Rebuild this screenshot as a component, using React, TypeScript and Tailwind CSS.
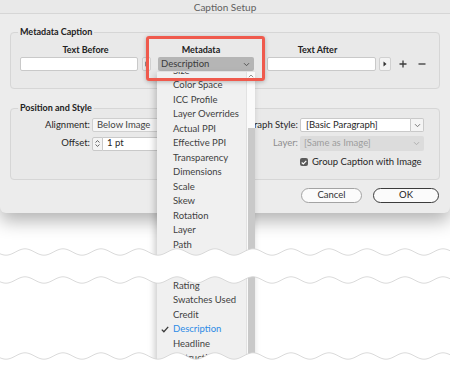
import React from "react";

const TOP_ITEMS = [
  "Size",
  "Color Space",
  "ICC Profile",
  "Layer Overrides",
  "Actual PPI",
  "Effective PPI",
  "Transparency",
  "Dimensions",
  "Scale",
  "Skew",
  "Rotation",
  "Layer",
  "Path",
  "Author",
];

const BOTTOM_ITEMS = ["Rating", "Swatches Used", "Credit", "Description", "Headline", "Instructions"];

// torn-paper wave, peaks every 38px
const wavePts = (cy: number, reverse = false) => {
  const pts: string[] = [];
  for (let i = 0; i <= 225; i++) {
    const x = reverse ? 450 - i * 2 : i * 2;
    const y = cy - 3.2 * Math.cos(((x - 25) / 38) * Math.PI * 2);
    pts.push(`${x},${y.toFixed(2)}`);
  }
  return pts;
};

const Chevron = ({ color = "#6b6b6b" }: { color?: string }) => (
  <svg width="7" height="5" viewBox="0 0 7 5">
    <path d="M1 1.2l2.5 2.5L6 1.2" fill="none" stroke={color} strokeWidth="1" />
  </svg>
);

const ArrowButton = ({ w }: { w: string }) => (
  <div className={`${w} h-[14px] flex items-center justify-center bg-[#f3f3f3] border border-[#d0d0d0] rounded-[2px]`}>
    <svg width="4" height="6" viewBox="0 0 4 6">
      <path d="M0.5 0.5L3.5 3L0.5 5.5Z" fill="#333" />
    </svg>
  </div>
);

const MenuItem = ({ label, checked }: { label: string; checked?: boolean }) => (
  <div className="h-[14.5px] flex items-center">
    <div className="w-[16px] pl-[4px] flex items-center">
      {checked && (
        <svg width="8" height="7" viewBox="0 0 8 7">
          <path d="M0.8 3.6L2.9 5.8L7.2 0.9" fill="none" stroke="#3a3a3a" strokeWidth="1.3" />
        </svg>
      )}
    </div>
    <span className={`whitespace-nowrap ${checked ? "text-[#2d8be6]" : "text-[#3f3f3f]"}`}>{label}</span>
  </div>
);

export default function App() {
  const w1 = wavePts(252);
  const w2 = wavePts(280);
  const w3 = wavePts(356);

  return (
    <div className="relative w-[450px] h-[376px] overflow-hidden bg-white font-['Lato','Noto_Sans',sans-serif] text-[9.5px] text-[#262626]">
      {/* dialog */}
      <div className="h-[213px] flex flex-col bg-[#ececec] rounded-b-[6px] shadow-[0_8px_18px_rgba(0,0,0,0.3)]">
        <div className="h-[14px] flex items-center justify-center bg-[#e9e9e9] border-b border-[#d6d6d6] text-[10px] text-[#5f5f5f] leading-none">
          Caption Setup
        </div>

        <fieldset className="mx-[10px] mt-[12px] pl-[7px] pb-[17px] border border-[#d6d6d6] rounded-[4px] bg-[#e9e9e9]">
          <legend className="px-[2px] text-[9px] font-bold leading-[12px] text-[#222]">Metadata Caption</legend>
          <div className="flex pt-[6px] ml-[2px]">
            <div className="w-[131px] flex flex-col items-center">
              <div className="h-[12px] leading-[12px] text-[9px] font-bold text-[#222]">Text Before</div>
              <div className="mt-[1px] flex">
                <div className="w-[118px] h-[14px] bg-white border border-[#c9c9c9] rounded-[2px]" />
                <div className="ml-[4px]">
                  <ArrowButton w="w-[9px]" />
                </div>
              </div>
            </div>
            <div className="ml-[7px] w-[96px] flex flex-col">
              <div className="h-[12px] leading-[12px] text-[9px] font-bold text-[#222] text-center pr-[10px]">Metadata</div>
              <div className="mt-[1px] h-[14px] flex items-center justify-between pl-[3px] pr-[4px] bg-[#b5b5b5] rounded-[2px] text-[#3a3a3a]">
                <span>Description</span>
                <Chevron color="#555" />
              </div>
            </div>
            <div className="ml-[13px] w-[124px] flex flex-col">
              <div className="h-[12px] leading-[12px] text-[9px] font-bold text-[#222] text-center pr-[23px]">Text After</div>
              <div className="mt-[1px] flex">
                <div className="w-[109px] h-[14px] bg-white border border-[#c9c9c9] rounded-[2px]" />
                <div className="ml-[3px]">
                  <ArrowButton w="w-[12px]" />
                </div>
              </div>
            </div>
            <div className="mt-[13px] h-[14px] flex items-center ml-[8px] gap-[11px]">
              <svg width="8" height="8" viewBox="0 0 8 8">
                <path d="M4 0.5V7.5M0.5 4H7.5" stroke="#3a3a3a" strokeWidth="1.3" />
              </svg>
              <svg width="8" height="8" viewBox="0 0 8 8">
                <path d="M0.5 4H7.5" stroke="#3a3a3a" strokeWidth="1.3" />
              </svg>
            </div>
          </div>
        </fieldset>

        <fieldset className="mx-[10px] mt-[13px] pl-[7px] pb-[10px] border border-[#d6d6d6] rounded-[4px] bg-[#e9e9e9]">
          <legend className="px-[2px] text-[9px] font-bold leading-[12px] text-[#222]">Position and Style</legend>
          <div className="pt-[4px] grid grid-cols-[72px_122px_86px_126px] gap-y-[4px] items-center">
            <div className="h-[14px] flex items-center justify-end whitespace-nowrap">Alignment:</div>
            <div className="pl-[2px]">
              <div className="h-[14px] flex items-center pl-[4px] bg-[#f6f6f6] border border-[#cfcfcf] rounded-[2px] text-[#444]">
                Below Image
              </div>
            </div>
            <div className="h-[14px] flex items-center justify-end whitespace-nowrap">Paragraph Style:</div>
            <div className="pl-[2px] flex">
              <div className="w-[111px] h-[14px] flex items-center pl-[5px] bg-white border border-[#c9c9c9] rounded-l-[2px]">
                [Basic Paragraph]
              </div>
              <div className="w-[13px] h-[14px] flex items-center justify-center bg-[#f4f4f4] border border-l-0 border-[#c9c9c9] rounded-r-[2px]">
                <Chevron color="#777" />
              </div>
            </div>

            <div className="h-[14px] flex items-center justify-end whitespace-nowrap">Offset:</div>
            <div className="pl-[2px] flex">
              <div className="w-[11px] h-[14px] flex flex-col items-center justify-center gap-[1px] bg-[#f4f4f4] border border-[#c9c9c9] rounded-l-[2px]">
                <svg width="5" height="3" viewBox="0 0 5 3">
                  <path d="M0.5 2.5L2.5 0.6L4.5 2.5" fill="none" stroke="#555" strokeWidth="0.9" />
                </svg>
                <svg width="5" height="3" viewBox="0 0 5 3">
                  <path d="M0.5 0.5L2.5 2.4L4.5 0.5" fill="none" stroke="#555" strokeWidth="0.9" />
                </svg>
              </div>
              <div className="w-[109px] h-[14px] flex items-center pl-[4px] bg-white border border-l-0 border-[#c9c9c9] rounded-r-[2px]">
                1 pt
              </div>
            </div>
            <div className="h-[14px] flex items-center justify-end text-[#8d8d8d]">Layer:</div>
            <div className="pl-[2px]">
              <div className="h-[15px] flex items-center justify-between pl-[4px] pr-[4px] bg-[#dcdcdc] rounded-[2px] text-[#9c9c9c]">
                <span>[Same as Image]</span>
                <Chevron color="#b0b0b0" />
              </div>
            </div>

            <div className="col-start-4 pl-[2px] h-[14px] flex items-center gap-[4px]">
              <div className="w-[8px] h-[8px] rounded-[2px] bg-[#5b5b5b] flex items-center justify-center">
                <svg width="6" height="5" viewBox="0 0 6 5">
                  <path d="M0.7 2.5L2.3 4L5.3 0.8" fill="none" stroke="#fff" strokeWidth="1.1" />
                </svg>
              </div>
              <span className="whitespace-nowrap">Group Caption with Image</span>
            </div>
          </div>
        </fieldset>

        <div className="mt-[8px] flex justify-end gap-[11px] pr-[11px]">
          <div className="w-[61px] h-[15px] flex items-center justify-center rounded-full border border-[#a3a3a3] bg-[#fbfbfb] text-[#333]">
            Cancel
          </div>
          <div className="w-[66px] h-[15px] flex items-center justify-center rounded-full border-[1.5px] border-[#3c3c3c] bg-[#fbfbfb] text-[#222]">
            OK
          </div>
        </div>
      </div>

      {/* open metadata menu */}
      <div className="absolute left-[157px] top-[72px] bottom-0 w-[98px] flex bg-[#f0f0f0] shadow-[-2px_3px_7px_rgba(0,0,0,0.22)] overflow-hidden">
        <div className="w-[89px] flex flex-col">
          <div className="-mt-[8.25px]">
            {TOP_ITEMS.map((t) => (
              <MenuItem key={t} label={t} />
            ))}
          </div>
          <div className="mt-[12px]">
            {BOTTOM_ITEMS.map((t) => (
              <MenuItem key={t} label={t} checked={t === "Description"} />
            ))}
          </div>
        </div>
        <div className="w-[9px] flex flex-col bg-[#fafafa] border-l border-[#e2e2e2]">
          <div className="h-[56px] flex justify-center pt-[2px]">
            <svg width="6" height="4" viewBox="0 0 6 4">
              <path d="M0.8 3.2L3 1L5.2 3.2" fill="none" stroke="#888" strokeWidth="0.9" />
            </svg>
          </div>
          <div className="flex-1 ml-[1px] bg-[#c9c9c9]" />
        </div>
      </div>

      {/* highlight */}
      <div className="absolute left-[146px] top-[36px] w-[119px] h-[45px] border-[3px] border-[#ef5a4d] rounded-[3px] shadow-[0_1px_4px_rgba(0,0,0,0.25)]" />

      {/* torn page breaks */}
      <svg className="absolute inset-0 pointer-events-none" width="450" height="376" viewBox="0 0 450 376">
        <path d={`M${w1.join(" L")} L${w2.slice().reverse().join(" L")} Z`} fill="#fff" />
        <path d={`M${w3.join(" L")} L450,376 L0,376 Z`} fill="#fff" />
        <path d={`M${w1.join(" L")}`} fill="none" stroke="#d0d0d0" strokeWidth="0.8" />
        <path d={`M${w2.join(" L")}`} fill="none" stroke="#d0d0d0" strokeWidth="0.8" />
        <path d={`M${w3.join(" L")}`} fill="none" stroke="#d0d0d0" strokeWidth="0.8" />
      </svg>
    </div>
  );
}
